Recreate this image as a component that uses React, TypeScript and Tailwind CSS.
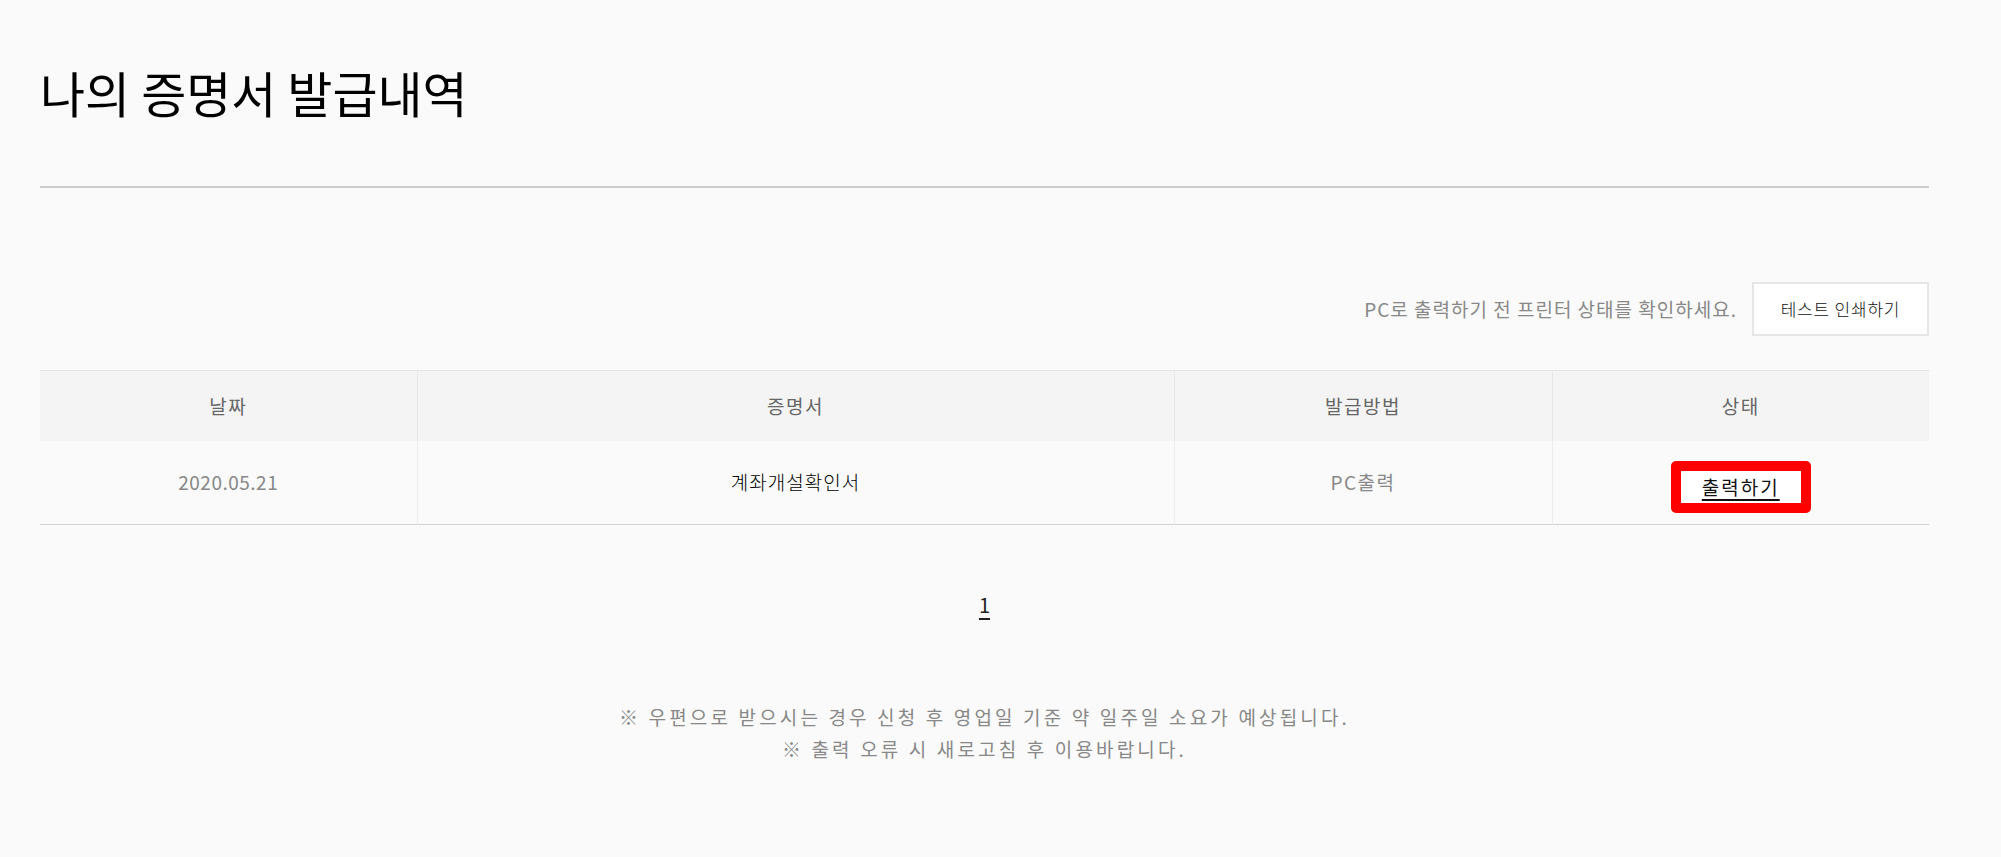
export default function App() {
  const notes = [
    "※ 우편으로 받으시는 경우 신청 후 영업일 기준 약 일주일 소요가 예상됩니다.",
    "※ 출력 오류 시 새로고침 후 이용바랍니다.",
  ];

  return (
    <div className="min-h-[857px] bg-[#fafafa] font-['Noto_Sans_CJK_KR','Noto_Sans',sans-serif] text-[#222]">
      <main className="ml-[40px] w-[1889px] pt-[67px] pb-[60px]">
        <h1 className="text-[49px] leading-[50px] font-normal text-black">
          나의 증명서 발급내역
        </h1>
        <div className="mt-[69px] h-[2px] bg-[#cccccc]" />

        {/* 프린터 안내 */}
        <div className="mt-[94px] flex items-center justify-end gap-[15px]">
          <p className="text-[19px] tracking-[1px] text-[#888]">
            PC로 출력하기 전 프린터 상태를 확인하세요.
          </p>
          <button className="h-[54px] w-[177px] border-2 border-[#e6e6e6] bg-white text-[17px] font-light tracking-[0.8px] text-[#111]">
            테스트 인쇄하기
          </button>
        </div>

        {/* 발급내역 테이블 */}
        <table className="mt-[34px] w-full table-fixed border-collapse text-[19px] tracking-[1.5px]">
          <colgroup>
            <col className="w-[377px]" />
            <col className="w-[757px]" />
            <col className="w-[378px]" />
            <col className="w-[377px]" />
          </colgroup>
          <thead>
            <tr className="h-[70px] border-t border-[#e6e6e6] bg-[#f4f4f4] text-[#666]">
              <th className="font-normal">날짜</th>
              <th className="border-l border-[#e8e8e8] font-normal">증명서</th>
              <th className="border-l border-[#e8e8e8] font-normal">발급방법</th>
              <th className="border-l border-[#e8e8e8] font-normal">상태</th>
            </tr>
          </thead>
          <tbody>
            <tr className="h-[84px] border-b border-[#d2d2d2] text-center">
              <td className="tracking-[0.5px] text-[#888]">2020.05.21</td>
              <td className="border-l border-[#ececec] font-light tracking-[1px] text-black">
                계좌개설확인서
              </td>
              <td className="border-l border-[#ececec] text-[#888]">PC출력</td>
              <td className="border-l border-[#ececec]">
                <div className="flex justify-center pt-[10px]">
                  <a
                    href="#"
                    className="flex h-[52px] w-[140px] items-center justify-center rounded-[5px] border-[10px] border-[#ff0000] bg-white tracking-[2px] text-[#111] underline decoration-2 underline-offset-[4px]"
                  >
                    출력하기
                  </a>
                </div>
              </td>
            </tr>
          </tbody>
        </table>

        {/* 페이지 */}
        <div className="mt-[70px] flex justify-center">
          <a href="#" className="text-[20px] leading-[20px] text-[#222] underline underline-offset-[5px]">
            1
          </a>
        </div>

        <div className="mt-[86px] text-center text-[19px] leading-[32px] tracking-[3.15px] text-[#888]">
          {notes.map((n) => (
            <p key={n}>{n}</p>
          ))}
        </div>
      </main>
    </div>
  );
}
